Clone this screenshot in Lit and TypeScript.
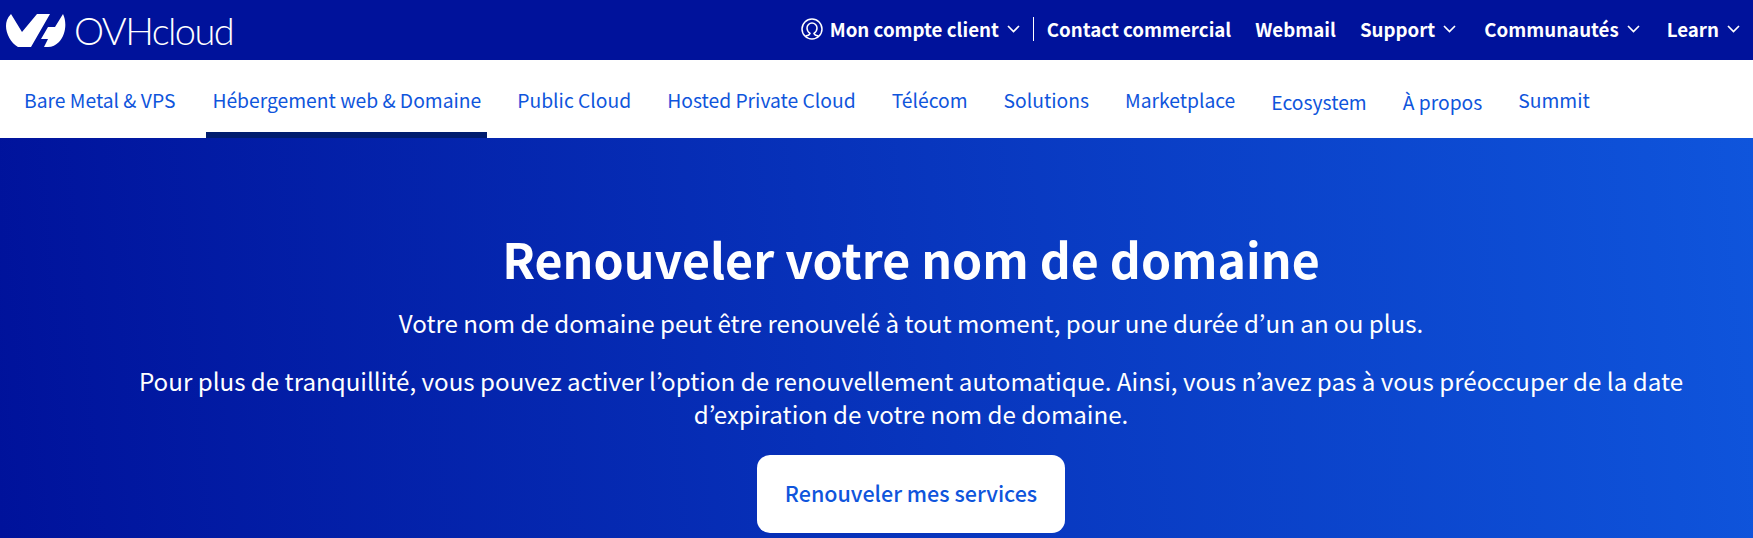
import { LitElement, html, css, svg } from "lit";
import { customElement } from "lit/decorators.js";

const chev = svg`<svg class="chev" viewBox="0 0 13 8"><path d="M1 1l5.500 5.500L12 1" fill="none" stroke="#fff" stroke-width="1.700"/></svg>`;

@customElement("app-root")
export class AppRoot extends LitElement {
  static styles = css`
    :host { display: block; width: 1753px; height: 538px; overflow: hidden; font-family: "Noto Sans CJK KR", "Source Sans Pro", sans-serif; color: #fff; }
    .top { height: 60px; background: #00129b; display: flex; align-items: center; justify-content: space-between; padding: 0 13px 0 6px; }
    .logo { display: flex; align-items: center; gap: 8px; }
    .logo-mark { width: 60px; height: 35px; display: block; margin-top: 1px; }
    .wordmark { font-family: "Lato", sans-serif; font-weight: 300; font-size: 38px; line-height: 40px; letter-spacing: -1.600px; }
    .util { display: flex; align-items: center; font-size: 18.7px; font-weight: 700; line-height: 24px; padding-bottom: 3px; }
    .item { display: inline-flex; align-items: center; gap: 8px; margin-left: 24px; white-space: nowrap; }
    .item.drop { padding-right: 4px; }
    .item.tight { padding-right: 3px; }
    .acct { gap: 7px; margin-left: 0; margin-right: 2px; }
    .acct .chev { margin-left: 1px; }
    .sep { width: 1px; height: 24px; background: #fff; margin-left: 11px; margin-right: -11px; }
    .chev { width: 13px; height: 8px; }
    .nav { height: 78px; background: #fff; display: flex; gap: 24px; padding-left: 18px; font-size: 19.3px; line-height: 24px; color: #0f55dc; box-sizing: border-box; }
    .nav a { padding: 28px 6px 0; height: 78px; box-sizing: border-box; white-space: nowrap; }
    .nav a:first-child { margin-right: 1px; }
    .nav a.low { padding-top: 30px; }
    .nav a.active { border-bottom: 6px solid #001c6e; }
    .hero { height: 400px; background: linear-gradient(85deg, #00129b 0%, #0f55dc 100%); display: flex; flex-direction: column; align-items: center; text-align: center; box-sizing: border-box; padding: 92px 0 0 69px; }
    h1 { margin: 0; font-size: 48.250px; line-height: 56px; font-weight: 700; }
    p { margin: 0; font-size: 24.150px; line-height: 33px; width: 1560px; }
    .p1 { margin-top: 20px; }
    .p2 { margin-top: 25px; }
    .btn { margin-top: 25px; width: 308px; height: 78px; background: #fff; border-radius: 13px; color: #0f55dc; font-size: 21.500px; line-height: 76px; font-weight: 500; }
  `;
  render() {
    return html`
      <div class="top">
        <div class="logo">
          <svg class="logo-mark" viewBox="6 13 60 35">
            <path fill="#fff" d="M11 14 C7 18 6 22 6 26 C6 34 11 43 18 47 L31 47 L50 14 L37 14 L22 32 Z"/>
            <path fill="#fff" d="M63 14 C67 22 66 35 59 42 C56 45 52 47 48 47 L44 47 L48 39 L41 39 L48 27 L55 27 Z"/>
          </svg>
          <div class="wordmark">OVHcloud</div>
        </div>
        <div class="util">
          <span class="item acct">
            <svg width="22" height="22" viewBox="0 0 22 22" fill="none" stroke="#fff" stroke-width="1.500">
              <circle cx="11" cy="11" r="10"/>
              <path d="M4.500 18c2.500-.5 4-1.200 4.500-2.600C7 14 6 12 6 10a5 5 0 0 1 10 0c0 2-1 4-3 5.400.5 1.400 2 2.100 4.500 2.600"/>
            </svg>
            Mon compte client ${chev}
          </span>
          <div class="sep"></div>
          <span class="item">Contact commercial</span>
          <span class="item">Webmail</span>
          <span class="item drop">Support ${chev}</span>
          <span class="item tight">Communautés ${chev}</span>
          <span class="item">Learn ${chev}</span>
        </div>
      </div>
      <nav class="nav">
        <a>Bare Metal & VPS</a>
        <a class="active">Hébergement web & Domaine</a>
        <a>Public Cloud</a>
        <a>Hosted Private Cloud</a>
        <a>Télécom</a>
        <a>Solutions</a>
        <a>Marketplace</a>
        <a class="low">Ecosystem</a>
        <a class="low">À propos</a>
        <a>Summit</a>
      </nav>
      <section class="hero">
        <h1>Renouveler votre nom de domaine</h1>
        <p class="p1">Votre nom de domaine peut être renouvelé à tout moment, pour une durée d’un an ou plus.</p>
        <p class="p2">Pour plus de tranquillité, vous pouvez activer l’option de renouvellement automatique. Ainsi, vous n’avez pas à vous préoccuper de la date d’expiration de votre nom de domaine.</p>
        <div class="btn">Renouveler mes services</div>
      </section>
    `;
  }
}
